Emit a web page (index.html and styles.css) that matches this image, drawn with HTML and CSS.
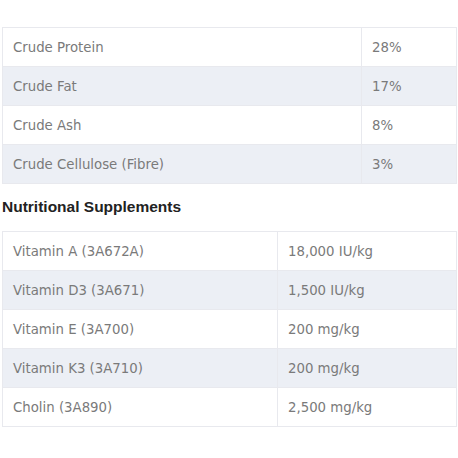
FILE: index.html
```html
<!DOCTYPE html>
<html lang="en">
<head>
    <meta charset="UTF-8">
    <title>Analytical Constituents</title>
    <link rel="stylesheet" href="styles.css">
</head>
<body>
    <div class="content">
        <table class="nutrition-table constituents">
            <tr><td>Crude Protein</td><td>28%</td></tr>
            <tr><td>Crude Fat</td><td>17%</td></tr>
            <tr><td>Crude Ash</td><td>8%</td></tr>
            <tr><td>Crude Cellulose (Fibre)</td><td>3%</td></tr>
        </table>

        <h3 class="section-title">Nutritional Supplements</h3>

        <table class="nutrition-table supplements">
            <tr><td>Vitamin A (3A672A)</td><td>18,000 IU/kg</td></tr>
            <tr><td>Vitamin D3 (3A671)</td><td>1,500 IU/kg</td></tr>
            <tr><td>Vitamin E (3A700)</td><td>200 mg/kg</td></tr>
            <tr><td>Vitamin K3 (3A710)</td><td>200 mg/kg</td></tr>
            <tr><td>Cholin (3A890)</td><td>2,500 mg/kg</td></tr>
        </table>
    </div>
</body>
</html>
```

FILE: styles.css
```css
body {
    font-family: "DejaVu Sans", sans-serif;
    margin: 0;
    padding: 0;
    background: #fff;
    color: #777;
}
.content {
    padding: 27px 1px 0 2px;
}
.nutrition-table {
    width: 100%;
    border-collapse: collapse;
    border: 1px solid #e8e9ee;
}
.nutrition-table td {
    height: 39px;
    padding: 0 10px;
    font-size: 13.3px;
    color: #7a7a7a;
    border: 1px solid #e8e9ee;
    box-sizing: border-box;
}
.nutrition-table tr:nth-child(even) td {
    background-color: #eceff5;
}
.constituents td:last-child {
    width: 95px;
}
.supplements td:last-child {
    width: 179px;
}
.section-title {
    margin: 0;
    height: 47px;
    padding-top: 2px;
    box-sizing: border-box;
    line-height: 42px;
    font-family: "Liberation Sans", Arial, sans-serif;
    font-size: 15.5px;
    font-weight: bold;
    color: #222;
}
```
